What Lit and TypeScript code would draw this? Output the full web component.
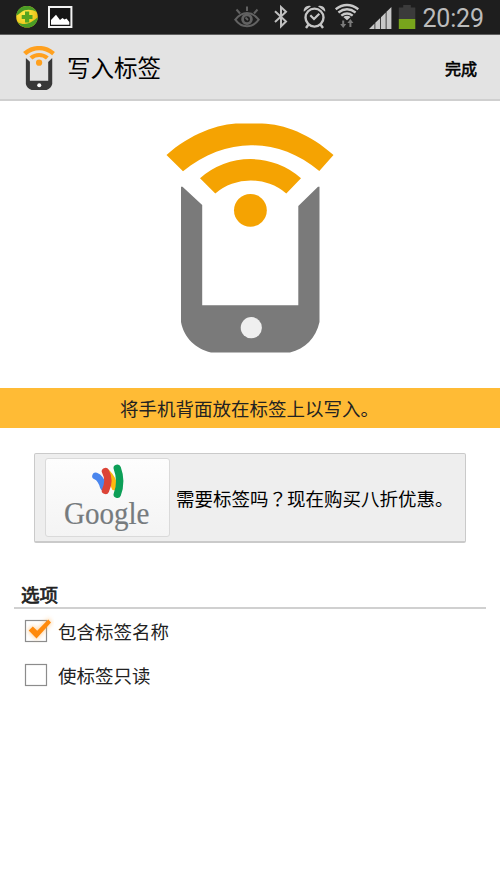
import { LitElement, html, css, svg, nothing } from "lit";
import { customElement, property, state } from "lit/decorators.js";

@customElement("tag-phone-icon")
class TagPhoneIcon extends LitElement {
  static styles = css`
    :host { display: block; }
    svg { display: block; width: 100%; height: 100%; }
    .wave { fill: var(--wave, #f5a302); }
    .body { fill: var(--body, #7a7a7a); }
    .home { fill: var(--home, #efefef); }
  `;
  render() {
    return html`<svg viewBox="166 123 168 230" preserveAspectRatio="none">
      <path class="wave" d="M166.5 155 C190 134 218 123.5 240 123.5 H262 C284 124 310 134 333.5 155 L319.3 171 C298 153 274 145.3 251 145.3 C228 145.3 204 154 183 171.3Z"/>
      <path class="wave" d="M200 178.3 A76 76 0 0 1 301 178.3 L286.3 193.5 A55 55 0 0 0 215.3 193.5Z"/>
      <circle class="wave" cx="250.4" cy="210.3" r="16.4"/>
      <path class="body" d="M181 186.8H182.5L202.2 205V305.3H298.3V206L318 186.8H319.5V322C316 338 305 349 290 352.4H211C196 349 184 338 181 322Z"/>
      <circle class="home" cx="251.3" cy="327.7" r="10.6"/>
    </svg>`;
  }
}

@customElement("status-bar")
class StatusBar extends LitElement {
  static styles = css`
    :host { display: block; }
    .bar {
      height: 35px; box-sizing: border-box; background: #1e1e1e; display: flex; align-items: center;
      border-bottom: 1px solid #606060;
    }
    svg { display: block; height: 34px; flex: none; }
    .notes { width: 80px; }
    .system { width: 190px; margin-left: auto; }
    .clock {
      width: 80px; height: 34px; box-sizing: border-box; padding: 2px 0 0 2.5px;
      font: 25px/34px Roboto, "Liberation Sans", sans-serif; color: #bcbcbc; letter-spacing: -0.2px;
    }
  `;
  render() {
    return html`<div class="bar">
      <svg class="notes" viewBox="0 0 80 34">
        <defs>
          <radialGradient id="ball" cx="40%" cy="35%" r="70%">
            <stop offset="0" stop-color="#fff04a"/><stop offset="1" stop-color="#e9b80c"/>
          </radialGradient>
        </defs>
        <circle cx="27" cy="16.8" r="10.8" fill="url(#ball)"/>
        <path d="M16.3 15.500C17 9 22 5.900 27 6C31 6 35 8.500 36.800 12C32 9 25 9 21.500 12C19 14 18 15 16.300 15.500Z" fill="#4a9c26"/>
        <path d="M37.700 17.500C37.500 24 32 27.800 27 27.600C23 27.500 19.500 25.500 17.500 22C22 25 28 24.500 32 21.500C35 19.500 36 18.500 37.700 17.500Z" fill="#4a9c26"/>
        <path d="M25 11.500H29.200V15H32.500V19H29.200V22.500H25V19H21.700V15H25Z" fill="#56a51f"/>
        <rect x="49" y="7" width="22.400" height="20" fill="#151515" stroke="#f2f2f2" stroke-width="2"/>
        <path d="M51 24.700V20L56 14.800L60 20L62.500 18L64.500 19.500L66.500 18.500L69.300 22V24.700Z" fill="#fff"/>
      </svg>
      <svg class="system" viewBox="230 0 190 34">
        <g stroke="#626262" fill="none" stroke-width="2">
          <path d="M235.300 19.600C239 15 242.500 13 247 13S255 15 258.700 19.600C255 24.800 251.500 26.200 247 26.200S239 24.800 235.300 19.600Z"/>
          <path d="M247 6.500V11M236.500 9.500L240 13.500M257.500 9.500L254 13.500"/>
          <circle cx="247" cy="19.200" r="4.400" stroke-width="2.800"/>
          <path d="M245.500 17.500L248 20" stroke-width="1.800"/>
        </g>
        <path d="M275 11.300L286 21.500L281 26.300V7L286 11.700L275 22" fill="none" stroke="#c0c0c0" stroke-width="2"/>
        <g stroke="#c6c6c6" fill="none" stroke-width="2.400">
          <circle cx="314.500" cy="17.600" r="9"/>
          <path d="M310.300 15.300L314 19L319.300 13.700" stroke-width="2.200"/>
          <path d="M308.500 24.500L306 28M320.500 24.500L323 28"/>
        </g>
        <path d="M303.800 11.800C303 8 307 4.600 311 6.200ZM325.200 11.800C326 8 322 4.600 318 6.200Z" fill="#c6c6c6"/>
        <g stroke="#c9c9c9" fill="none" stroke-width="2.400">
          <path d="M335.700 9.200Q347 0.800 358.300 9.200"/>
          <path d="M338.400 12.500Q347 6.200 355.600 12.500"/>
          <path d="M341.300 15.600Q347 11.200 352.700 15.600"/>
        </g>
        <path d="M343.300 17Q347 14.600 350.700 17L347 20.200Z" fill="#c9c9c9"/>
        <path d="M343.200 20.500V25.500M350.400 27V22" stroke="#7b7b7b" stroke-width="2" fill="none"/>
        <path d="M340.200 24H346.200L343.200 28ZM347.400 23H353.400L350.400 19Z" fill="#7b7b7b"/>
        <path d="M369 29L374.500 23.600V29ZM375.300 22.800L380.200 18V29H375.300ZM381 17.200L385.700 12.600V29H381ZM386.500 11.800L391.400 7V29H386.500Z" fill="#c8c8c8"/>
        <path d="M398.800 7.500H403.200V5H410.800V7.500H415.300V19H398.800Z" fill="#3b3b3b"/>
        <rect x="398.800" y="19" width="16.500" height="10" fill="#78a51c"/>
      </svg>
      <div class="clock">20:29</div>
    </div>`;
  }
}

@customElement("option-row")
class OptionRow extends LitElement {
  @property() label = "";
  @property({ type: Boolean }) checked = false;
  static styles = css`
    .row { display: flex; align-items: center; height: 44px; color: #222; cursor: pointer; }
    svg { display: block; width: 34px; height: 34px; margin: 0 4px 0 20px; }
    .text { font-size: 18.5px; line-height: 26px; }
  `;
  render() {
    return html`<div class="row">
      <svg viewBox="0 0 34 34">
        <defs><filter id="glow" x="-30%" y="-30%" width="160%" height="160%"><feGaussianBlur stdDeviation="2"/></filter></defs>
        <rect x="5.500" y="6.500" width="21" height="21" fill="#fff" stroke="#8c8c8c" stroke-width="1.200"/>
        ${this.checked
          ? svg`<path d="M8.700 16.500L12.800 12.600L17.200 16.700L28.200 5.500L31 8.500L16.500 24.500Z" fill="#ffb45c" stroke="#ffb45c" stroke-width="2" opacity=".5" filter="url(#glow)"/>
                <path d="M8.700 16.500L12.800 12.600L17.200 16.700L28.200 5.500L31 8.500L16.500 24.500Z" fill="#ff8a0c"/>`
          : nothing}
      </svg>
      <span class="text">${this.label}</span>
    </div>`;
  }
}

@customElement("app-root")
class AppRoot extends LitElement {
  @state() private options = [
    { label: "包含标签名称", checked: true },
    { label: "使标签只读", checked: false },
  ];
  static styles = css`
    :host {
      display: block; height: 888px; overflow: hidden; background: #fff; color: #111;
      font-family: "Noto Sans CJK SC", sans-serif;
    }
    .header {
      height: 66px; box-sizing: border-box; background: #e3e3e3; display: flex; align-items: center;
      padding: 0 23px; border-bottom: 2px solid #cfcfcf;
    }
    .logo { width: 32px; height: 44px; margin-top: 2px; --wave: #ffa01e; --body: #383838; --home: #fff; }
    .title { margin-left: 12px; font-size: 23.5px; line-height: 34px; color: #000; }
    .done {
      margin-left: auto; padding-top: 2px; font-size: 16px; line-height: 24px; color: #000;
      -webkit-text-stroke: 0.6px #000;
    }
    .hero { display: flex; justify-content: center; height: 287px; padding-top: 22px; box-sizing: border-box; }
    .phone { width: 168px; height: 230px; }
    .banner {
      height: 40px; background: #ffbb35; padding-left: 120px;
      font-size: 18.5px; line-height: 41px; color: #222;
    }
    .offer {
      margin: 25px 34px 0; height: 90px; box-sizing: border-box; background: #eee;
      border: 1px solid #cacaca; border-bottom-width: 2px; border-radius: 2px;
      display: flex; align-items: center; padding-left: 10px; font-size: 18.5px; color: #000;
    }
    .wallet {
      width: 125px; height: 79px; box-sizing: border-box; border: 1px solid #dadada; border-radius: 3px;
      background: linear-gradient(#fdfdfd, #f4f4f4); margin-right: 6px; flex: none;
    }
    .wallet svg { display: block; width: 123px; height: 77px; }
    .brand { font: 32px "Liberation Serif", serif; fill: #767b7e; stroke: #767b7e; stroke-width: 0.2px; }
    .mark { font-family: "Noto Sans CJK TC", sans-serif; }
    .section {
      margin: 37px 14px 0; height: 29px; padding-left: 7px; border-bottom: 2px solid #d0d0d0; box-sizing: border-box;
      font-size: 18.5px; line-height: 28px; color: #222; -webkit-text-stroke: 0.7px #222;
    }
  `;
  render() {
    return html`
      <status-bar></status-bar>
      <div class="header">
        <tag-phone-icon class="logo"></tag-phone-icon>
        <div class="title">写入标签</div>
        <div class="done">完成</div>
      </div>
      <div class="hero"><tag-phone-icon class="phone"></tag-phone-icon></div>
      <div class="banner" lang="zh-CN">将手机背面放在标签上以写入。</div>
      <div class="offer">
        <div class="wallet">
          <svg viewBox="46 459 123 77">
            <g fill="none" stroke-linecap="round">
              <path d="M95.700 476C99.500 477.500 101.800 481 103.500 487" stroke="#4a86ee" stroke-width="7"/>
              <path d="M107.500 473C111.500 477 113.500 481 114.500 487" stroke="#fbb90f" stroke-width="6.500"/>
              <path d="M105.500 471.500C108.500 477 108.500 484 105.500 490.500" stroke="#dc4437" stroke-width="7.400"/>
              <path d="M117.300 468.300C120.500 477 120.500 486 117.300 494.300" stroke="#0c9f57" stroke-width="7.400"/>
            </g>
            <text class="brand" x="64" y="524" textLength="85.500" lengthAdjust="spacingAndGlyphs">Google</text>
          </svg>
        </div>
        <div lang="zh-CN">需要标签吗<span class="mark" lang="zh-TW">？</span>现在购买八折优惠。</div>
      </div>
      <div class="section">选项</div>
      ${this.options.map((o) => html`<option-row .label=${o.label} .checked=${o.checked}></option-row>`)}
    `;
  }
}
